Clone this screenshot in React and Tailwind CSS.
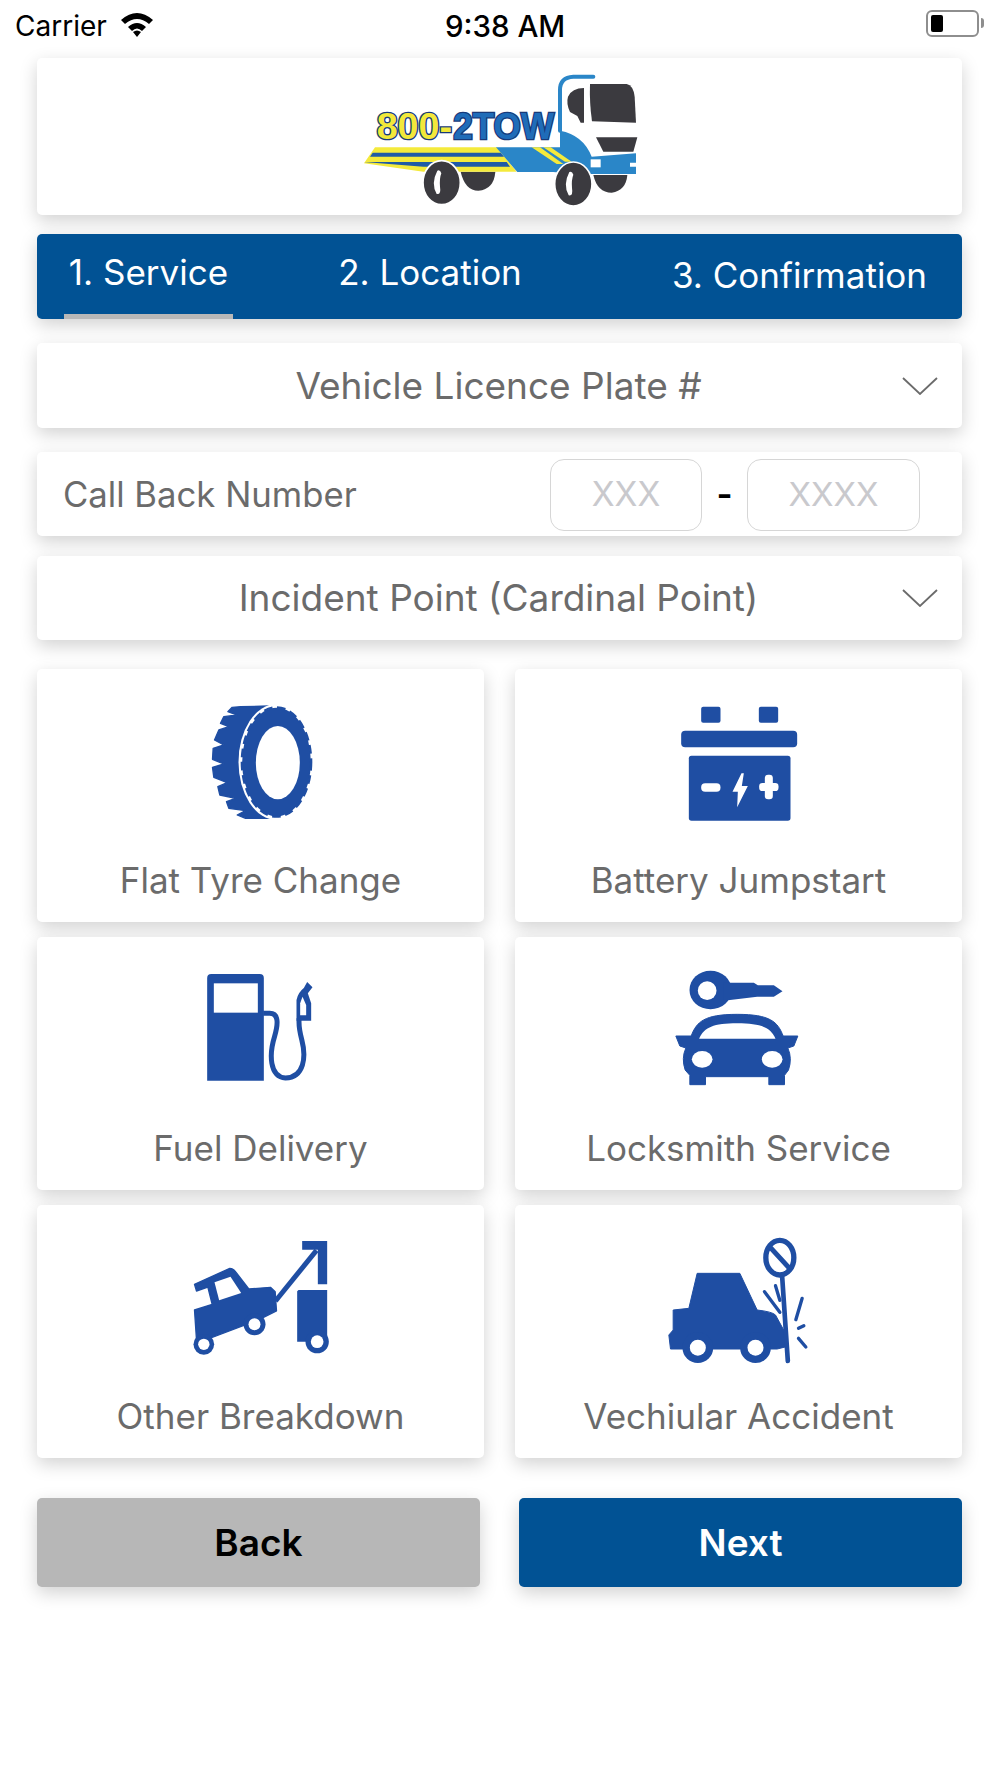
import React from 'react'

const BLUE = '#1f4ea3'

function Chevron() {
  return (
    <svg width="36" height="18" viewBox="0 0 36 18" className="absolute right-[24px] top-1/2 -translate-y-1/2">
      <path d="M1 1 L18 17 L35 1" fill="none" stroke="#6b6b6b" strokeWidth="1.8" />
    </svg>
  )
}

function Logo() {
  return (
    <svg width="320" height="157" viewBox="0 -6 960 471">
      {/* back wheels */}
      <path d="M362 335 Q375 392 415 392 Q462 388 466 335 Z" fill="#3b3a3f" />
      <path d="M760 345 Q772 398 815 398 Q858 392 862 345 Z" fill="#3b3a3f" />
      {/* flatbed stripes */}
      <path d="M105 262 H470 L530 335 H250 L72 310 Z" fill="#f4ea3c" />
      <path d="M98 278 H482 L492 290 H90 Z" fill="#1f5aa6" />
      <path d="M72 306 H500 L510 320 L250 320 Z" fill="#1f5aa6" />
      {/* cab and deck */}
      <path d="M468 262 H660 V212 Q730 225 755 290 L888 280 V308 H870 V320 H888 V342 H700 L640 336 H532 Z" fill="#2a86c8" />
      <path d="M575 262 H600 L670 312 H650 Z M610 262 H632 L695 305 H675 Z" fill="#f4ea3c" />
      <path d="M660 212 V90 Q660 52 700 50 H760" fill="none" stroke="#2a86c8" strokeWidth="12" strokeLinecap="round" />
      <rect x="752" y="298" width="30" height="24" fill="#fff" />
      <path d="M768 232 H892 L880 275 H790 Z" fill="#3b3a3f" />
      {/* windows */}
      <path d="M750 72 H860 Q880 76 884 110 L888 188 L756 184 Q748 130 750 72 Z" fill="#3b3a3f" />
      <path d="M732 84 V188 H722 L712 168 L690 156 Q678 130 684 110 Q696 84 732 84 Z" fill="#3b3a3f" />
      {/* front wheels */}
      <ellipse cx="305" cy="368" rx="56" ry="66" fill="#3b3a3f" stroke="#fff" strokeWidth="5" />
      <path d="M292 332 Q272 370 290 402 Q304 405 300 380 Q298 355 304 340 Q300 328 292 332 Z" fill="#fff" />
      <ellipse cx="700" cy="372" rx="56" ry="66" fill="#3b3a3f" stroke="#fff" strokeWidth="5" />
      <path d="M688 336 Q668 374 686 406 Q700 409 696 384 Q694 359 700 344 Q696 332 688 336 Z" fill="#fff" />
      {/* wordmark */}
      <text x="110" y="236" fontFamily="'Liberation Sans', sans-serif" fontWeight="700" fontSize="108" textLength="226" lengthAdjust="spacingAndGlyphs" fill="#f2e83a" stroke="#173a7a" strokeWidth="8" paintOrder="stroke">800-</text>
      <text x="340" y="238" fontFamily="'Liberation Sans', sans-serif" fontWeight="700" fontSize="112" textLength="302" lengthAdjust="spacingAndGlyphs" fill="#1f6cb8" stroke="#173a7a" strokeWidth="8" paintOrder="stroke">2TOW</text>
    </svg>
  )
}

function TyreIcon() {
  return (
    <svg width="150" height="150" viewBox="-13.5 0 450 450" fill={BLUE}>
      <path d="M150 50 L235 48 L240 385 L165 385 L140 375 L165 362 L115 355 L108 335 L135 325 L88 315 L82 290 L110 278 L70 262 L66 232 L100 222 L66 208 L68 175 L100 165 L72 150 L85 120 L115 110 L90 100 L100 80 L140 75 L112 65 L125 52 Z" stroke={BLUE} strokeWidth="4" strokeLinejoin="round" />
      <ellipse cx="258" cy="216" rx="114" ry="174" fill="#fff" />
      <ellipse cx="258" cy="216" rx="103" ry="163" />
      <ellipse cx="258" cy="216" rx="104" ry="164" fill="none" stroke={BLUE} strokeWidth="7" strokeDasharray="26 14" />
      <ellipse cx="262" cy="218" rx="66" ry="110" fill="#fff" />
    </svg>
  )
}

function BatteryIcon() {
  return (
    <svg width="150" height="150" viewBox="10.5 0 450 450" fill={BLUE}>
      <rect x="122" y="50" width="58" height="48" rx="6" />
      <rect x="295" y="50" width="58" height="48" rx="6" />
      <rect x="62" y="122" width="348" height="50" rx="12" />
      <rect x="85" y="197" width="305" height="195" rx="8" />
      <rect x="122" y="280" width="58" height="25" rx="12" fill="#fff" />
      <path d="M243 250 L216 305 L232 305 L230 352 L262 288 L244 288 L250 250 Z" fill="#fff" />
      <rect x="296" y="279" width="58" height="24" rx="10" fill="#fff" />
      <rect x="313" y="254" width="24" height="74" rx="10" fill="#fff" />
    </svg>
  )
}

function FuelIcon() {
  return (
    <svg width="150" height="150" viewBox="-13.5 -6 450 450" fill={BLUE}>
      <path d="M62 42 H208 Q220 42 220 54 V362 H50 V54 Q50 42 62 42 Z" />
      <rect x="70" y="70" width="132" height="88" fill="#fff" />
      <path d="M218 160 H238 C264 160 264 190 252 230 C236 282 236 350 285 354 C342 352 347 290 334 240 C326 210 324 195 326 175" fill="none" stroke={BLUE} strokeWidth="15" />
      <path d="M350 66 L366 82 L352 100 L362 130 L362 182 L318 182 L318 120 Q322 98 340 84 Z" />
      <path d="M336 110 L347 135 V166 L329 166 V130 Z" fill="#fff" />
    </svg>
  )
}

function LockIcon() {
  return (
    <svg width="150" height="150" viewBox="10.5 -6 450 450" fill={BLUE}>
      <ellipse cx="150" cy="90" rx="63" ry="58" />
      <path d="M190 68 H280 L292 76 H340 L366 94 L340 110 H290 L190 122 Z" />
      <ellipse cx="140" cy="92" rx="28" ry="28" fill="#fff" />
      <path d="M46 228 H92 C108 186 130 163 230 163 C330 163 352 186 368 228 H412 L400 258 L382 264 Q396 295 384 330 L372 346 V374 H325 V350 H135 V374 H88 V346 L74 330 Q62 295 76 264 L58 258 Z" stroke={BLUE} strokeWidth="3" strokeLinejoin="round" />
      <path d="M116 236 C130 202 160 190 230 190 C300 190 330 202 345 236 Z" fill="#fff" />
      <ellipse cx="125" cy="298" rx="31" ry="25" fill="#fff" />
      <ellipse cx="335" cy="298" rx="31" ry="25" fill="#fff" />
    </svg>
  )
}

function BreakdownIcon() {
  return (
    <svg width="150" height="150" viewBox="16.5 3 450 450" fill={BLUE}>
      <path d="M42 178 L148 130 Q158 130 165 140 L205 192 L270 187 L284 200 L288 258 L240 282 L75 345 L48 345 L42 255 L95 238 L82 186 L48 198 Z" stroke={BLUE} strokeWidth="4" strokeLinejoin="round" />
      <path d="M102 172 L150 155 L182 204 L116 226 Z" fill="#fff" />
      <circle cx="70" cy="358" r="31" />
      <circle cx="70" cy="358" r="17" fill="#fff" />
      <circle cx="222" cy="298" r="33" />
      <circle cx="222" cy="298" r="18" fill="#fff" />
      <path d="M285 228 L408 76" fill="none" stroke={BLUE} strokeWidth="15" />
      <path d="M365 48 H440 V178 H412 V74 H365 Z" />
      <path d="M354 195 H440 V350 H350 V199 Z" />
      <circle cx="410" cy="350" r="35" />
      <circle cx="410" cy="350" r="19" fill="#fff" />
    </svg>
  )
}

function AccidentIcon() {
  return (
    <svg width="150" height="150" viewBox="10.5 3 450 450" fill={BLUE}>
      <path d="M110 145 H238 L290 255 Q335 260 345 270 L375 325 L378 365 L350 372 H30 L25 330 L38 315 V255 L85 250 Z" stroke={BLUE} strokeWidth="3" strokeLinejoin="round" />
      <circle cx="112" cy="368" r="46" />
      <circle cx="112" cy="368" r="24" fill="#fff" />
      <circle cx="285" cy="368" r="46" />
      <circle cx="285" cy="368" r="24" fill="#fff" />
      <path d="M352 262 L376 325 L384 395 L400 395 L388 262 Z" fill="#fff" />
      <g fill="none" stroke={BLUE} strokeLinecap="round">
        <ellipse cx="358" cy="98" rx="42" ry="52" strokeWidth="16" />
        <path d="M332 70 L385 128" strokeWidth="15" />
        <path d="M365 155 L382 408" strokeWidth="14" />
        <path d="M312 200 L358 262 M345 182 L358 226 M425 220 L406 284 M430 302 L414 310 M414 340 L436 366" strokeWidth="10" />
      </g>
    </svg>
  )
}

const services = [
  { label: 'Flat Tyre Change', Icon: TyreIcon },
  { label: 'Battery Jumpstart', Icon: BatteryIcon },
  { label: 'Fuel Delivery', Icon: FuelIcon },
  { label: 'Locksmith Service', Icon: LockIcon },
  { label: 'Other Breakdown', Icon: BreakdownIcon },
  { label: 'Vechiular Accident', Icon: AccidentIcon },
]

const cardShadow = 'rounded-[5px] bg-white shadow-[0_6px_18px_rgba(0,0,0,0.18)]'

export default function App() {
  return (
    <div className="w-[1000px] h-[1778px] bg-white overflow-hidden font-['Inter',sans-serif] text-[#6b6b6b]">
      {/* status bar */}
      <div className="relative flex h-[50px] items-center pt-[2px] text-black">
        <span className="ml-[15px] text-[28px]">Carrier</span>
        <svg width="34" height="26" viewBox="0 0 34 26" className="ml-[13px] mb-[4px]">
          <path d="M1 9 Q17 -5 33 9 L29 13 Q17 3 5 13 Z M8 16 Q17 8 26 16 L22 20 Q17 15 12 20 Z M13 21 Q17 18 21 21 L17 26 Z" fill="#000" />
        </svg>
        <span className="absolute left-[445px] text-[29.5px] font-medium">9:38 AM</span>
        <div className="absolute left-[926px] top-[10px] h-[27px] w-[53px] rounded-[6px] border-2 border-[#8e8e8e] p-[3px]">
          <div className="h-full w-[12px] rounded-[2px] bg-black" />
        </div>
        <div className="absolute left-[981px] top-[18px] h-[10px] w-[3px] rounded-r bg-[#8e8e8e]" />
      </div>

      <div className="pl-[37px] pr-[38px]">
        {/* logo */}
        <div className={`mt-[8px] flex h-[157px] justify-center ${cardShadow}`}>
          <Logo />
        </div>

        {/* steps */}
        <div className="mt-[19px] flex h-[85px] whitespace-nowrap rounded-[5px] bg-[#015294] pl-[27px] text-[35px] text-white shadow-[0_6px_18px_rgba(0,0,0,0.18)]">
          <div className="flex w-[169px] shrink-0 items-center justify-center border-b-[5px] border-[#b8b8b8] pb-[3px]">1. Service</div>
          <div className="ml-[97px] flex w-[200px] shrink-0 items-center justify-center pb-[8px]">2. Location</div>
          <div className="ml-[143px] flex w-[253px] shrink-0 items-center justify-center pb-[3px]">3. Confirmation</div>
        </div>

        {/* vehicle */}
        <div className={`relative mt-[24px] flex h-[85px] items-center justify-center pr-[2px] text-[37px] ${cardShadow}`}>
          Vehicle Licence Plate #
          <Chevron />
        </div>

        {/* phone */}
        <div className={`mt-[24px] flex h-[84px] items-center pl-[26px] text-[34.7px] ${cardShadow}`}>
          <span className="w-[487px]">Call Back Number</span>
          <div className="mt-[1px] flex h-[72px] w-[152px] items-center justify-center rounded-[14px] border border-[#d6d6d6] text-[33.5px] text-[#c9c9cd]">XXX</div>
          <span className="w-[45px] text-center font-semibold text-black">-</span>
          <div className="mt-[1px] flex h-[72px] w-[173px] items-center justify-center rounded-[14px] border border-[#d6d6d6] text-[33px] text-[#c9c9cd]">XXXX</div>
        </div>

        {/* incident */}
        <div className={`relative mt-[20px] flex h-[84px] items-center justify-center pr-[2px] text-[37px] ${cardShadow}`}>
          Incident Point (Cardinal Point)
          <Chevron />
        </div>

        {/* services */}
        <div className="mt-[29px] grid grid-cols-2 gap-x-[31px] gap-y-[15px]">
          {services.map(({ label, Icon }) => (
            <div key={label} className={`flex h-[253px] flex-col items-center pt-[21px] ${cardShadow}`}>
              <Icon />
              <span className="mt-[20px] text-[35px] leading-[40px]">{label}</span>
            </div>
          ))}
        </div>

        {/* actions */}
        <div className="mt-[40px] flex justify-between text-[37px] font-semibold">
          <button className="h-[89px] w-[443px] rounded-[5px] bg-[#b7b7b7] text-black shadow-[0_6px_18px_rgba(0,0,0,0.18)]">Back</button>
          <button className="h-[89px] w-[443px] rounded-[5px] bg-[#015294] text-white shadow-[0_6px_18px_rgba(0,0,0,0.18)]">Next</button>
        </div>
      </div>
    </div>
  )
}
